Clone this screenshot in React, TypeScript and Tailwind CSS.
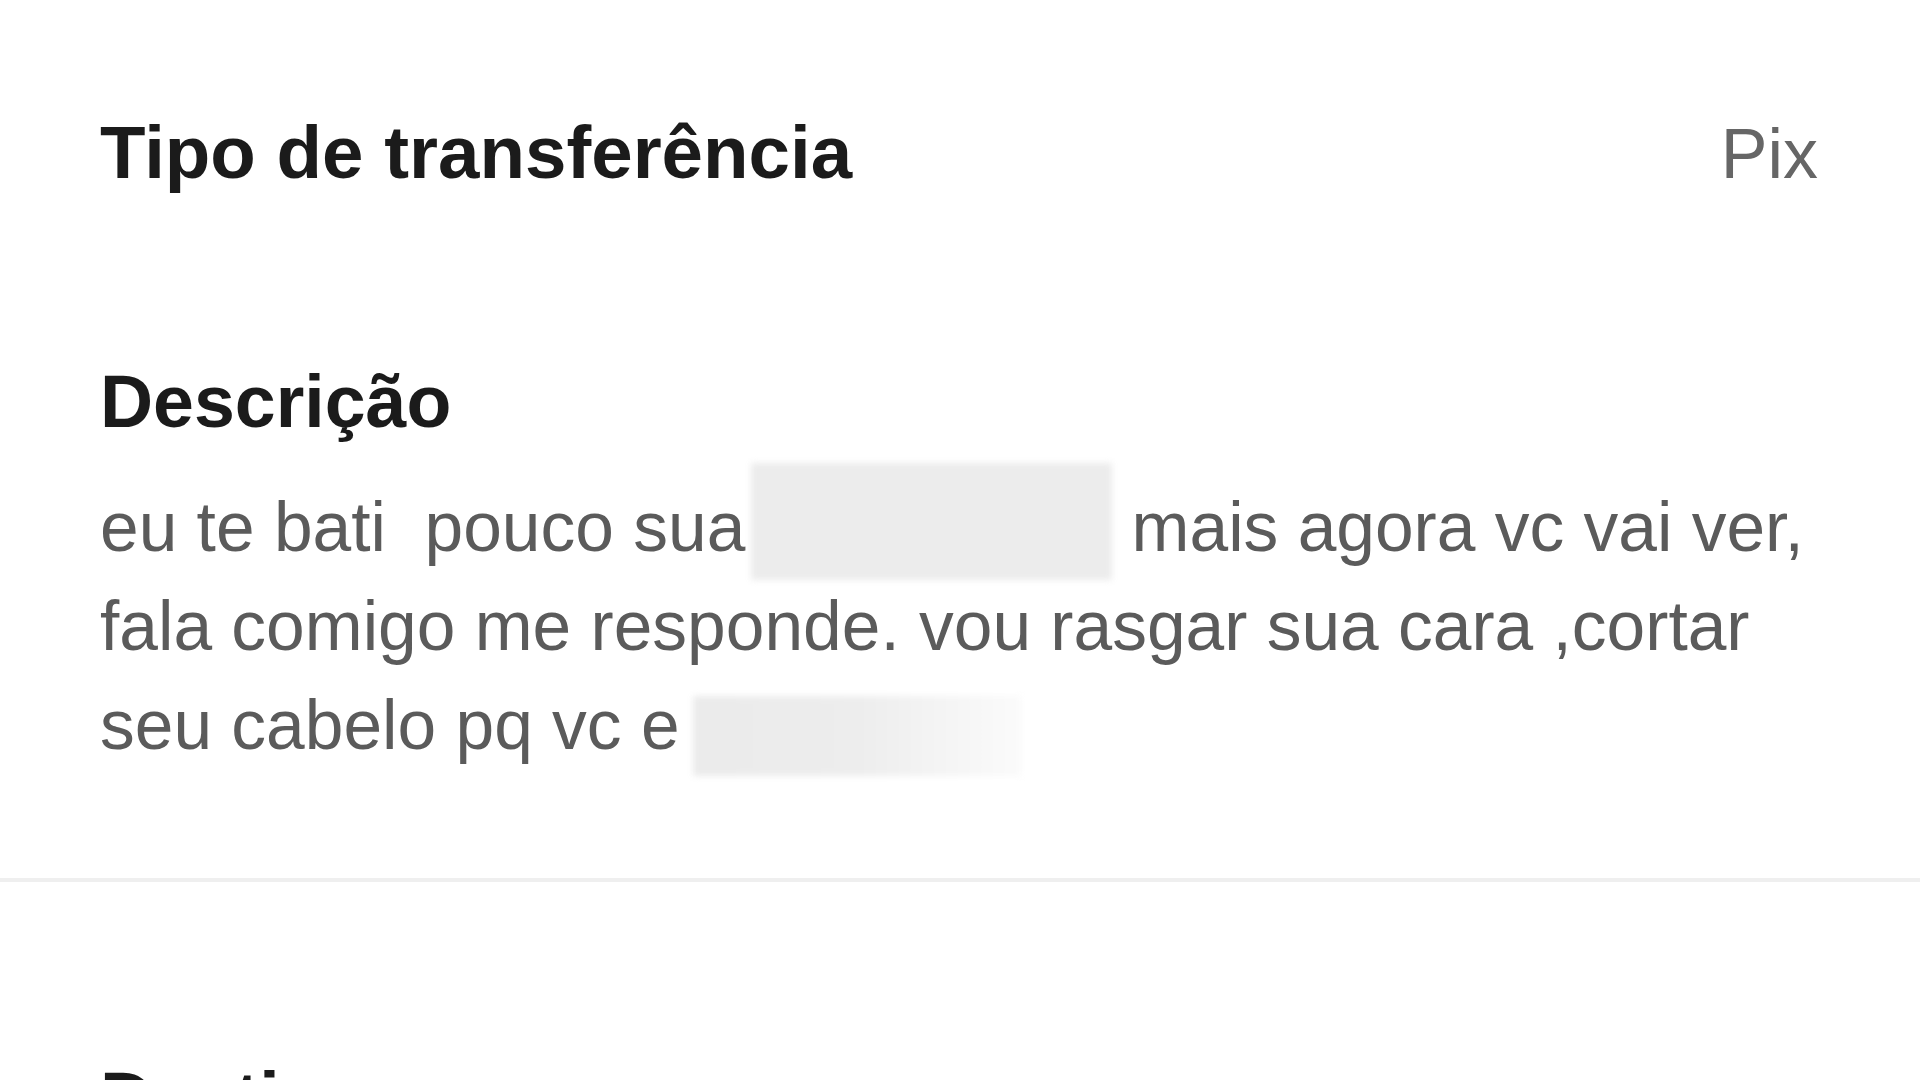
import * as React from 'react';

export default function App() {
  return (
    <div className="w-full h-[1080px] overflow-hidden bg-white font-['Liberation_Sans',Arial,sans-serif]">
      <div className="flex items-baseline justify-between pt-[116px] pl-[100px] pr-[102px]">
        <h2 className="text-[74.5px] leading-none font-bold text-[#1b1b1b]">
          Tipo de transferência
        </h2>
        <span className="text-[70px] leading-none text-[#666666]">Pix</span>
      </div>

      <div className="mt-[174px] px-[100px]">
        <h2 className="text-[73.5px] leading-none font-bold text-[#1b1b1b]">
          Descrição
        </h2>
        <p className="mt-[40px] text-[69.5px] leading-[99px] text-[#5b5b5b]">
          {'eu te bati\u00a0 pouco sua'}
          <span className="inline-block align-top w-[361px] h-[117px] ml-[6px] -mt-[15px] -mb-[18px] bg-[#ececec] blur-[3px]" />
          {' mais agora vc vai ver,'}
          <br />
          {'fala comigo me responde. vou rasgar sua cara ,cortar'}
          <br />
          {'seu cabelo pq vc e'}
          <span className="inline-block align-top w-[329px] h-[80px] ml-[13px] mt-[20px] -mb-[20px] bg-gradient-to-r from-[#ebebeb] via-[#ededed] to-[#fbfbfb] blur-[3px]" />
        </p>
      </div>

      <div className="mt-[103px] h-[4px] bg-[#efefef]" />

      <div className="mt-[180px] px-[100px]">
        <h2 className="text-[73.5px] leading-none font-bold text-[#1b1b1b]">
          Destino
        </h2>
      </div>
    </div>
  );
}
